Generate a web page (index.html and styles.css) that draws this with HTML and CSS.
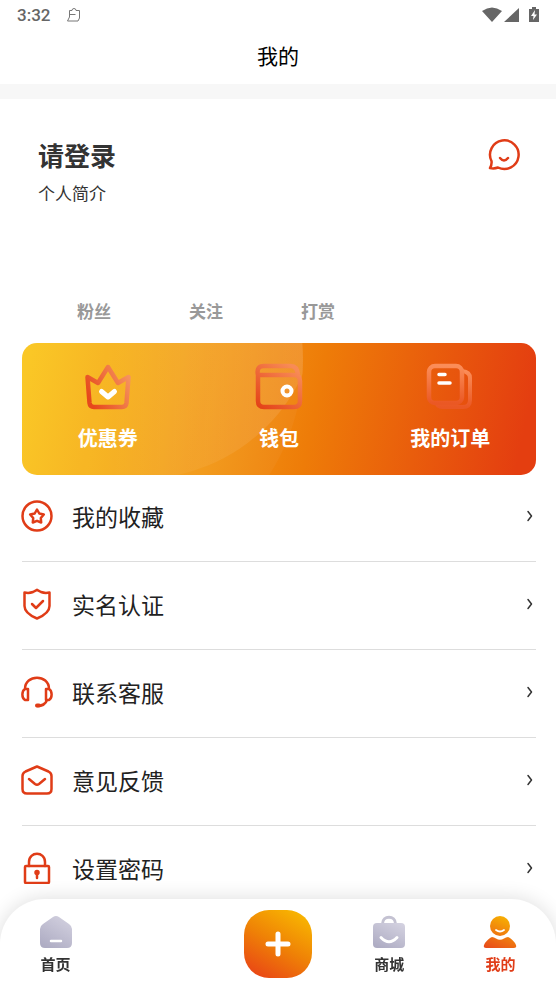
FILE: index.html
```html
<!DOCTYPE html>
<html lang="zh-CN">
<head>
<meta charset="utf-8">
<meta name="viewport" content="width=device-width, initial-scale=1">
<title>我的</title>
<link rel="stylesheet" href="styles.css">
</head>
<body>
<div class="status">
  <span class="clock">3:32</span>
  <svg class="notice" width="16" height="16" viewBox="0 0 16 16" fill="none" stroke="#777" stroke-width="1"><path d="M3.500 3.500H6Q6 1.500 8 1.500T10 3.500H13.500V11L12 14H1.500L3.500 10ZM4 7.500H9.500"/></svg>
  <svg class="signals" width="58" height="18" viewBox="0 0 58 18" fill="#666"><path d="M0 5Q10 -2 20 5L10 16ZM22 16L37 2V16ZM47 3H50V1H54V3H57V16H47Z"/><path d="M53 4L49 10H51.500L51 14L55 8.500H52.500Z" fill="#fff"/></svg>
</div>
<header class="title"><h1>我的</h1></header>
<main>
  <section class="profile">
    <div>
      <h2>请登录</h2>
      <p>个人简介</p>
    </div>
    <button class="chat" aria-label="消息"><svg width="34" height="34" viewBox="0 0 34 34" fill="none" stroke="#e03c17" stroke-width="2.500" stroke-linecap="round" stroke-linejoin="round"><path d="M4.500 23A14.300 14.300 0 1 1 11 29.500Q7 31 3 30Q5 27 4.500 23Z"/><path d="M13 20Q17 25 21 20"/></svg></button>
  </section>
  <section class="stats"><a href="#fans">粉丝</a><a href="#follow">关注</a><a href="#reward">打赏</a></section>

  <nav class="card">
    <svg class="card-bg" viewBox="0 0 514 132" preserveAspectRatio="none">
      <defs>
        <linearGradient id="cardFill" gradientUnits="userSpaceOnUse" x1="10" y1="0" x2="500" y2="100"><stop offset="0" stop-color="#fac51e"/><stop offset=".3" stop-color="#f4a31a"/><stop offset=".58" stop-color="#ee7c08"/><stop offset="1" stop-color="#e43e10"/></linearGradient>
        <linearGradient id="haze"><stop offset=".4" stop-color="#fff" stop-opacity="0"/><stop offset="1" stop-color="#fff" stop-opacity=".12"/></linearGradient>
        <clipPath id="disc"><circle cx="68" cy="17" r="213"/></clipPath>
      </defs>
      <path fill="url(#cardFill)" d="M0 0H514V132H0Z"/>
      <circle cx="68" cy="17" r="213" fill="#fff" fill-opacity=".04"/>
      <circle cx="118" cy="-43" r="179" fill="url(#haze)" clip-path="url(#disc)"/>
    </svg>
    <a href="#coupon"><svg width="48" height="48" viewBox="0 0 48 48" fill="none" stroke-linecap="round" stroke-linejoin="round"><defs><linearGradient id="crown" x1="0" y1=".7" x2="1" y2=".2"><stop offset="0" stop-color="#e6481c"/><stop offset="1" stop-color="#f6935e"/></linearGradient></defs><path stroke="url(#crown)" stroke-width="4.500" d="M3.500 14L14 20L24 4L34 20L44.500 14L42.500 40Q42 44 38 44H10Q6 44 5.500 40Z"/><path stroke="#fff" stroke-width="5" d="M17.500 28.500L24 34L30.500 28.500"/></svg><span>优惠券</span></a>
    <a href="#wallet"><svg width="48" height="48" viewBox="0 0 48 48" fill="none" stroke-linejoin="round"><defs><linearGradient id="purse" x1="0" y1="1" x2=".8" y2="0"><stop offset="0" stop-color="#e34117"/><stop offset="1" stop-color="#f88b56"/></linearGradient></defs><path stroke="url(#purse)" stroke-width="4.500" d="M3 12Q1 3 9 3H36Q42 3 43 12M3 10V38Q3 44 9 44H39Q45 44 45 38V18Q45 12 39 12H5"/><circle cx="32" cy="28" r="4.500" stroke="#fff" stroke-width="4"/></svg><span>钱包</span></a>
    <a href="#orders"><svg width="48" height="48" viewBox="0 0 48 48" fill="none" stroke-linecap="round"><defs><linearGradient id="sheet" x1="0" y1="0" x2="0" y2="1"><stop offset="0" stop-color="#fb8d58"/><stop offset="1" stop-color="#ea5824"/></linearGradient></defs><path stroke="url(#sheet)" stroke-width="4" d="M36 8Q44 9 44 15V37Q44 44 37 44H18Q11 44 11 40"/><rect x="3" y="3" width="33" height="37" rx="6" stroke="url(#sheet)" stroke-width="4.500"/><path stroke="#fff" stroke-width="3.500" d="M13 11.500H19M13 20H24"/></svg><span>我的订单</span></a>
  </nav>

  <nav class="menu">
    <a href="#favorites"><svg viewBox="0 0 32 32"><circle cx="16" cy="16" r="14.500"/><path d="M16 9.500L18.300 13.500L22.800 14.500L19.800 18L20.200 22.500L16 20.800L11.800 22.500L12.200 18L9.200 14.500L13.700 13.500Z"/></svg><span>我的收藏</span><svg class="arrow" viewBox="0 0 8 12"><path d="M2 1.500L5.500 6L2 10.500"/></svg></a>
    <a href="#verify"><svg viewBox="0 0 32 32"><path d="M16 1.800L20 4Q24 5.500 28.500 4.500V18C28.500 24 22 28 16 30.500C10 28 3.500 24 3.500 18V4.500Q8 5.500 12 4Z"/><path d="M11 16L15 20L22 13"/></svg><span>实名认证</span><svg class="arrow" viewBox="0 0 8 12"><path d="M2 1.500L5.500 6L2 10.500"/></svg></a>
    <a href="#service"><svg viewBox="0 0 32 32"><path d="M4 13C4 -2 28 -2 28 13M7 13H4C.5 15 .5 22 4 24H7ZM25 13H28C31.500 15 31.500 22 28 24H25ZM26 24Q24 30 16 30"/><path stroke-width="4" d="M16 29.500H18"/></svg><span>联系客服</span><svg class="arrow" viewBox="0 0 8 12"><path d="M2 1.500L5.500 6L2 10.500"/></svg></a>
    <a href="#feedback"><svg viewBox="0 0 32 32"><path d="M16 2.500L27.500 7.500Q30.500 9 30.500 12V25Q30.500 29.500 26 29.500H6Q1.500 29.500 1.500 25V12Q1.500 9 4.500 7.500Z"/><path d="M8 15L14 20Q16 21.500 18 20L24 15"/></svg><span>意见反馈</span><svg class="arrow" viewBox="0 0 8 12"><path d="M2 1.500L5.500 6L2 10.500"/></svg></a>
    <a href="#password"><svg viewBox="0 0 32 32"><rect x="4" y="14" width="24" height="17" rx="1"/><path d="M8 14V10C8 -1 24 -1 24 10V14"/><path d="M16 21V26"/><circle cx="16" cy="20.500" r="1.500" fill="#e03c17"/></svg><span>设置密码</span><svg class="arrow" viewBox="0 0 8 12"><path d="M2 1.500L5.500 6L2 10.500"/></svg></a>
  </nav>
</main>

<nav class="tabs">
  <a href="#home"><svg width="34" height="34" viewBox="0 0 34 34"><defs><linearGradient id="lilac" x1=".8" y1="0" x2=".2" y2="1"><stop offset="0" stop-color="#d2d0df"/><stop offset="1" stop-color="#aeacc3"/></linearGradient></defs><path fill="url(#lilac)" d="M14 2Q17 0 20 2L30 9Q33 11 33 14V28Q33 33 28 33H6Q1 33 1 28V14Q1 11 4 9Z"/><path stroke="#fff" stroke-width="2.500" stroke-linecap="round" d="M12 26H22"/></svg><span>首页</span></a>
  <span></span>
  <button class="add" aria-label="发布"><svg width="26" height="26" viewBox="0 0 26 26" stroke="#fff" stroke-width="5" stroke-linecap="round"><path d="M13 3V23M3 13H23"/></svg></button>
  <a href="#mall"><svg width="34" height="34" viewBox="0 0 34 34" fill="none"><path stroke="#c4c2d2" stroke-width="3" d="M10.500 9C10.500 0 23.500 0 23.500 9"/><rect x="1" y="8" width="32" height="25" rx="4" fill="url(#lilac)"/><path stroke="#fff" stroke-width="3" stroke-linecap="round" d="M9 22.500Q17 31 25 22.500"/></svg><span>商城</span></a>
  <a href="#me" class="active"><svg width="34" height="34" viewBox="0 0 34 34"><defs><linearGradient id="flame" gradientUnits="userSpaceOnUse" x1="24" y1="0" x2="9" y2="36"><stop offset="0" stop-color="#f8b600"/><stop offset="1" stop-color="#e8491b"/></linearGradient></defs><circle cx="17" cy="11" r="10" fill="url(#flame)"/><path fill="url(#flame)" d="M9 22Q11 22 13 23.500Q17 26 21 23.500Q23 22 25 22Q28 23 32 28Q35 33 31 33H3Q-1 33 2 28Q6 23 9 22Z"/><path fill="none" stroke="#fff" stroke-width="1.800" stroke-linecap="round" d="M13 15Q17 18 21 15"/></svg><span>我的</span></a>
</nav>
</body>
</html>
```
FILE: styles.css
```css
* {
  box-sizing: border-box;
}

body {
  margin: 0;
  background: #fff;
  color: #222;
  font-family: Roboto, "Noto Sans CJK SC", sans-serif;
  height: 100vh;
  overflow: hidden;
}

a {
  color: inherit;
  text-decoration: none;
}

button {
  padding: 0;
  border: 0;
  background: none;
}

svg {
  display: block;
  flex: none;
}

h1, h2, p {
  margin: 0;
}

.status {
  display: flex;
  align-items: center;
  height: 30px;
  padding: 0 16px 0 17px;
  color: #666;
}

.clock {
  font-size: 17px;
  font-weight: 500;
}

.notice {
  margin-left: 16px;
}

.signals {
  margin-left: auto;
}

.title {
  height: 69px;
  padding-top: 11px;
  border-bottom: 15px solid #f7f7f7;
  text-align: center;
}

.title h1 {
  color: #000;
  font-size: 21px;
  font-weight: 400;
  line-height: 32px;
}

main {
  padding: 0 20px 0 22px;
}

.profile {
  display: flex;
  justify-content: space-between;
  align-items: flex-start;
  padding: 39px 15px 0 16px;
}

.profile h2 {
  color: #333;
  font-size: 26px;
  font-weight: 700;
  line-height: 38px;
}

.profile p {
  margin-top: 5px;
  color: #333;
  font-size: 17px;
  line-height: 26px;
}

.stats {
  display: flex;
  margin: 93px 0 19px 16px;
}

.stats a {
  width: 112px;
  color: #999;
  font-size: 17px;
  font-weight: 700;
  line-height: 24px;
  text-align: center;
}

.card {
  position: relative;
  display: grid;
  grid-template-columns: repeat(3, 1fr);
  height: 132px;
  border-radius: 15px;
  overflow: hidden;
}

.card-bg {
  position: absolute;
  inset: 0;
  width: 100%;
  height: 100%;
}

.card a {
  position: relative;
  display: flex;
  flex-direction: column;
  align-items: center;
  gap: 13px;
  padding-top: 20px;
  color: #fff;
  font-size: 20px;
  font-weight: 700;
  line-height: 30px;
}

.menu {
  margin-top: -1px;
}

.menu a {
  display: flex;
  align-items: center;
  gap: 19px;
  height: 88px;
  padding: 0 2px 3px 0;
  border-bottom: 1px solid #ddd;
  font-size: 23px;
}

.menu svg {
  width: 32px;
  height: 32px;
  margin-left: -1px;
  fill: none;
  stroke: #e03c17;
  stroke-width: 2.5;
  stroke-linecap: round;
  stroke-linejoin: round;
}

.menu .arrow {
  width: 8px;
  height: 12px;
  margin-left: auto;
  stroke: #333;
  stroke-width: 1.5;
}

.tabs {
  position: fixed;
  right: 0;
  bottom: 0;
  left: 0;
  display: grid;
  grid-template-columns: repeat(5, 1fr);
  height: 89px;
  border-radius: 45px 45px 0 0;
  background: #fff;
  box-shadow: 0 0 20px rgba(0, 0, 0, 0.14);
}

.tabs a {
  display: flex;
  flex-direction: column;
  align-items: center;
  gap: 5px;
  padding-top: 16px;
  color: #333;
  font-size: 15px;
  font-weight: 700;
  line-height: 22px;
}

.tabs .active {
  color: #e03c17;
}

.add {
  display: grid;
  place-items: center;
  place-self: center;
  width: 68px;
  height: 68px;
  border-radius: 25px;
  background: linear-gradient(210deg, #fac000 0%, #ef8206 50%, #e83c18 100%);
}
```
